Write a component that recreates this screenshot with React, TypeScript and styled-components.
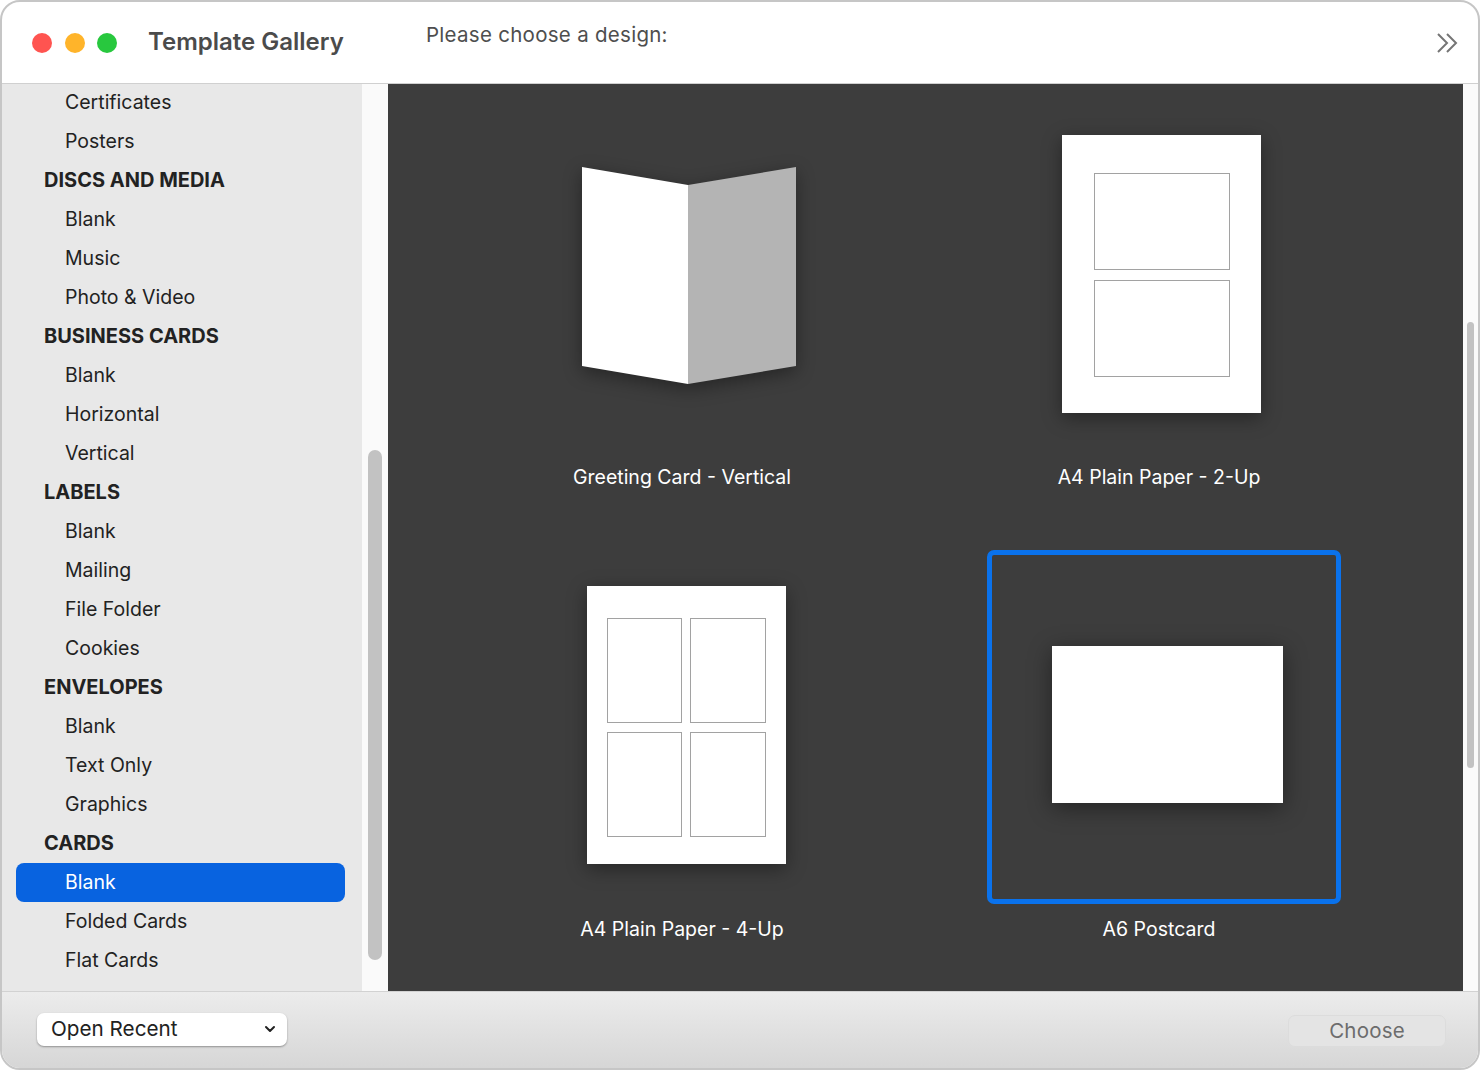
import React from "react";
import styled, { createGlobalStyle } from "styled-components";
import { ChevronDown } from "lucide-react";

const GlobalStyle = createGlobalStyle`
  html, body {
    margin: 0;
    padding: 0;
    background: #fff;
  }
  * {
    box-sizing: border-box;
  }
`;

const Window = styled.div`
  width: 1480px;
  height: 1070px;
  border: 2px solid #c6c6c6;
  border-radius: 20px;
  overflow: hidden;
  display: flex;
  flex-direction: column;
  font-family: Inter, "Liberation Sans", sans-serif;
  background: #fff;
`;

const TitleBar = styled.header`
  height: 82px;
  flex: none;
  display: flex;
  padding-left: 30px;
  padding-right: 20px;
  border-bottom: 1px solid #d0d0d0;
`;

const Lights = styled.div`
  display: flex;
  gap: 12.5px;
  align-items: center;
  width: 116px;
`;

const Light = styled.span<{ $color: string }>`
  width: 20px;
  height: 20px;
  border-radius: 50%;
  background: ${(props) => props.$color};
`;

const Title = styled.h1`
  margin: -2px 0 0;
  width: 278px;
  align-self: center;
  font-size: 24px;
  font-weight: 600;
  color: #4b4b4b;
`;

const Prompt = styled.p`
  margin: 19px 0 0;
  flex: 1;
  font-size: 20.5px;
  line-height: 28px;
  color: #4e4e4e;
  letter-spacing: 0.28px;
`;

const MoreButton = styled.svg`
  width: 22px;
  height: 22px;
  align-self: center;
  fill: none;
  stroke: #757575;
  stroke-width: 2;
`;

const Body = styled.div`
  height: 907px;
  flex: none;
  display: flex;
`;

const Sidebar = styled.nav`
  width: 360px;
  flex: none;
  background: #e8e8e8;
  overflow: hidden;
`;

const List = styled.ul`
  list-style: none;
  margin: -1px 0 0;
  padding: 0;
`;

const Row = styled.li<{ $selected?: boolean; $heading?: boolean }>`
  height: 39px;
  margin: 0 17px 0 14px;
  padding: 0 0 1px ${(props) => (props.$heading ? "28px" : "49px")};
  display: flex;
  align-items: center;
  border-radius: 8px;
  font-size: ${(props) => (props.$heading ? "20px" : "19.5px")};
  font-weight: ${(props) => (props.$heading ? 700 : 400)};
  color: ${(props) => (props.$selected ? "#fff" : "#222")};
  background: ${(props) => (props.$selected ? "#0863e0" : "transparent")};
`;

const ScrollTrack = styled.div<{ $width: number; $top: number; $side: number }>`
  width: ${(props) => props.$width}px;
  flex: none;
  background: #fafafa;
  padding: ${(props) => props.$top}px ${(props) => props.$side}px 0;
`;

const ScrollThumb = styled.div<{ $height: number }>`
  height: ${(props) => props.$height}px;
  border-radius: 7px;
  background: #c2c2c2;
`;

const Gallery = styled.main`
  flex: 1;
  background: #3d3d3d;
  overflow: hidden;
  padding: 14px 0 0 122px;
  display: grid;
  grid-template-columns: 354px 354px;
  grid-auto-rows: 452px;
  column-gap: 123px;
`;

const Cell = styled.div`
  display: flex;
  flex-direction: column;
`;

const Frame = styled.div<{ $selected?: boolean }>`
  height: 354px;
  flex: none;
  display: flex;
  align-items: center;
  justify-content: center;
  border: 5px solid ${(props) => (props.$selected ? "#0a72ec" : "transparent")};
  border-radius: 7px;
`;

const Caption = styled.div`
  margin-top: 11px;
  padding-right: 10px;
  text-align: center;
  font-size: 19.5px;
  line-height: 28px;
  color: #fff;
`;

const Sheet = styled.div<{ $x: number; $y: number }>`
  width: 199px;
  height: 278px;
  background: #fff;
  box-shadow: 0 5px 18px rgba(0, 0, 0, 0.38);
  margin: ${(props) => props.$y}px 0 0 ${(props) => props.$x}px;
  display: grid;
`;

const TwoUp = styled(Sheet)`
  padding: 38px 31px 36px 32px;
  grid-template-rows: 97px 97px;
  row-gap: 10px;
`;

const FourUp = styled(Sheet)`
  padding: 32px 20px 27px;
  grid-template-columns: 75px 76px;
  grid-template-rows: 105px 105px;
  column-gap: 8px;
  row-gap: 9px;
`;

const Pane = styled.div`
  border: 1px solid #a2a2a2;
`;

const Postcard = styled.div`
  width: 231px;
  height: 157px;
  margin: -5px 0 0 7px;
  background: #fff;
  box-shadow: 0 5px 22px rgba(0, 0, 0, 0.42);
`;

const FoldedCard = styled.svg`
  width: 214px;
  height: 217px;
  margin: 1px 0 0 4px;
  overflow: visible;
  filter: drop-shadow(0 5px 9px rgba(0, 0, 0, 0.38));
`;

const Footer = styled.footer`
  flex: 1;
  min-height: 0;
  display: flex;
  align-items: center;
  justify-content: space-between;
  padding: 0 32px 0 35px;
  border-top: 1px solid #d2d2d2;
  background: linear-gradient(#ececec, #d6d6d6);
`;

const Select = styled.div`
  width: 250px;
  height: 33px;
  margin-top: -1px;
  padding: 0 9px 2px 14px;
  display: flex;
  align-items: center;
  justify-content: space-between;
  border-radius: 7px;
  background: #fff;
  box-shadow: 0 1px 2px rgba(0, 0, 0, 0.35);
  font-size: 20.7px;
  color: #222;
`;

const ChooseButton = styled.button`
  width: 158px;
  height: 32px;
  margin-top: 1px;
  padding: 0;
  border: 1px solid #dcdcdc;
  border-radius: 7px;
  background: #e4e4e4;
  font-family: inherit;
  font-size: 20.5px;
  color: #6c6c6c;
  letter-spacing: 0.2px;
`;

type Entry = { label: string; heading?: boolean; selected?: boolean };

const entries: Entry[] = [
  { label: "Certificates" },
  { label: "Posters" },
  { label: "DISCS AND MEDIA", heading: true },
  { label: "Blank" },
  { label: "Music" },
  { label: "Photo & Video" },
  { label: "BUSINESS CARDS", heading: true },
  { label: "Blank" },
  { label: "Horizontal" },
  { label: "Vertical" },
  { label: "LABELS", heading: true },
  { label: "Blank" },
  { label: "Mailing" },
  { label: "File Folder" },
  { label: "Cookies" },
  { label: "ENVELOPES", heading: true },
  { label: "Blank" },
  { label: "Text Only" },
  { label: "Graphics" },
  { label: "CARDS", heading: true },
  { label: "Blank", selected: true },
  { label: "Folded Cards" },
  { label: "Flat Cards" },
];

const App: React.FC = () => {
  return (
    <Window>
      <GlobalStyle />
      <TitleBar>
        <Lights>
          <Light $color="#ff5450" />
          <Light $color="#ffb42a" />
          <Light $color="#28c83e" />
        </Lights>
        <Title>Template Gallery</Title>
        <Prompt>Please choose a design:</Prompt>
        <MoreButton viewBox="0 0 22 22">
          <polyline points="2,2 11,11 2,20" />
          <polyline points="11,2 20,11 11,20" />
        </MoreButton>
      </TitleBar>

      <Body>
        <Sidebar>
          <List>
            {entries.map((entry, i) => (
              <Row key={i} $heading={entry.heading} $selected={entry.selected}>
                {entry.label}
              </Row>
            ))}
          </List>
        </Sidebar>
        <ScrollTrack $width={26} $top={366} $side={6}>
          <ScrollThumb $height={510} />
        </ScrollTrack>

        <Gallery>
          <Cell>
            <Frame>
              <FoldedCard viewBox="0 0 214 217">
                <polygon points="0,0 106,18 106,217 0,199" fill="#fff" />
                <polygon points="106,18 214,0 214,199 106,217" fill="#b4b4b4" />
              </FoldedCard>
            </Frame>
            <Caption>Greeting Card - Vertical</Caption>
          </Cell>
          <Cell>
            <Frame>
              <TwoUp $x={-5} $y={-2}>
                <Pane />
                <Pane />
              </TwoUp>
            </Frame>
            <Caption>A4 Plain Paper - 2-Up</Caption>
          </Cell>
          <Cell>
            <Frame>
              <FourUp $x={-1} $y={-4}>
                <Pane />
                <Pane />
                <Pane />
                <Pane />
              </FourUp>
            </Frame>
            <Caption>A4 Plain Paper - 4-Up</Caption>
          </Cell>
          <Cell>
            <Frame $selected>
              <Postcard />
            </Frame>
            <Caption>A6 Postcard</Caption>
          </Cell>
        </Gallery>

        <ScrollTrack $width={15} $top={238} $side={4}>
          <ScrollThumb $height={446} />
        </ScrollTrack>
      </Body>

      <Footer>
        <Select>
          Open Recent
          <ChevronDown size={16} strokeWidth={3} color="#222" />
        </Select>
        <ChooseButton>Choose</ChooseButton>
      </Footer>
    </Window>
  );
};

export default App;
